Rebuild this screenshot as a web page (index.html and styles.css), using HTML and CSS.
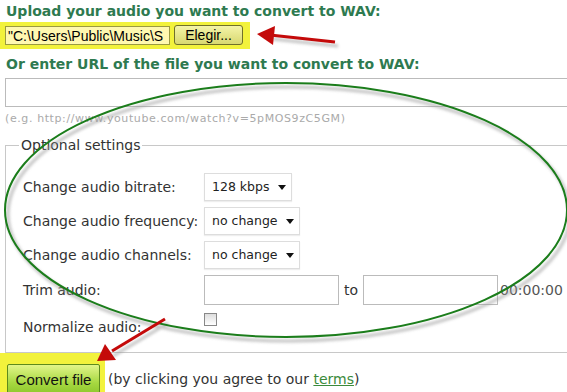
FILE: index.html
```html
<!DOCTYPE html>
<html lang="en">
<head>
    <meta charset="UTF-8">
    <meta name="viewport" content="width=device-width, initial-scale=1.0">
    <title>Convert audio to WAV</title>
    <link rel="stylesheet" href="styles.css">
</head>
<body>
    <div class="page">
        <h2 class="title">Upload your audio you want to convert to WAV:</h2>
        <div class="mark upload">
            <div class="file-path">"C:\Users\Public\Music\S</div>
            <button class="choose">Elegir...</button>
        </div>
        <h2 class="title second">Or enter URL of the file you want to convert to WAV:</h2>
        <div class="url"></div>
        <p class="hint">(e.g. http://www.youtube.com/watch?v=5pMOS9zC5GM)</p>

        <fieldset class="options">
            <legend>Optional settings</legend>
            <div class="row">
                <span class="label">Change audio bitrate:</span>
                <span class="select narrow">128 kbps<i class="caret"></i></span>
            </div>
            <div class="row">
                <span class="label">Change audio frequency:</span>
                <span class="select">no change<i class="caret"></i></span>
            </div>
            <div class="row">
                <span class="label">Change audio channels:</span>
                <span class="select">no change<i class="caret"></i></span>
            </div>
            <div class="row trim">
                <span class="label">Trim audio:</span>
                <span class="time"></span>
                <span class="to">to</span>
                <span class="time"></span>
                <span class="fmt">00:00:00</span>
            </div>
            <div class="row norm">
                <span class="label">Normalize audio:</span>
                <span class="check"></span>
            </div>
        </fieldset>

        <div class="submit">
            <span class="mark convert-mark"><button class="convert">Convert file</button></span>
            <span class="agree">(by clicking you agree to our <a href="#">terms</a>)</span>
        </div>

        <!-- hand drawn notes over the screenshot -->
        <svg class="notes" width="567" height="392" viewBox="0 0 567 392">
            <defs>
                <filter id="soft" x="-10%" y="-10%" width="120%" height="120%">
                    <feGaussianBlur stdDeviation="1.6"/>
                </filter>
            </defs>
            <g class="shadow" filter="url(#soft)" transform="translate(3 4)">
                <ellipse cx="286" cy="210" rx="281" ry="127"/>
                <line x1="335" y1="42" x2="270" y2="35"/>
                <line x1="165" y1="319" x2="110" y2="352"/>
            </g>
            <ellipse class="ring" cx="286" cy="210" rx="281" ry="127"/>
            <g class="arrow">
                <line x1="335" y1="42" x2="270" y2="35"/>
                <polygon points="257,34 275,26 273,45"/>
                <line x1="165" y1="319" x2="112" y2="351"/>
                <polygon points="97,361 105,344 116,360"/>
            </g>
        </svg>
    </div>
</body>
</html>
```

FILE: styles.css
```css
body {
    margin: 0;
    font-family: Verdana, "DejaVu Sans", sans-serif;
    color: #333;
    background: #fff;
    overflow: hidden;
}
.page {
    position: relative;
    width: 640px;
    height: 392px;
}
.title {
    margin: 0 0 0 6px;
    padding-top: 2px;
    font-size: 14px;
    line-height: 18px;
    font-weight: bold;
    color: #2e7a50;
}
.title.second {
    padding-top: 6px;
}
.mark {
    background: #f2f23c;
}
.upload {
    display: inline-flex;
    align-items: center;
    gap: 4px;
    margin-top: 2px;
    padding: 3px 7px 4px 5px;
}
.file-path {
    width: 165px;
    height: 19px;
    box-sizing: border-box;
    padding: 1px 2px;
    overflow: hidden;
    white-space: nowrap;
    background: #fff8b0;
    border: 1px solid #9a9a40;
    font-family: "Liberation Sans", Arial, sans-serif;
    font-size: 14px;
    line-height: 16px;
    color: #000;
}
.choose {
    width: 69px;
    height: 20px;
    padding: 0;
    border: 1px solid #70702a;
    border-radius: 3px;
    background: linear-gradient(#f4f4a8, #d8d870);
    font-family: "Liberation Sans", Arial, sans-serif;
    font-size: 14px;
    color: #000;
}
.url {
    margin: 5px 0 0 5px;
    height: 29px;
    border: 1px solid #bbb;
    border-right: none;
    box-sizing: border-box;
}
.hint {
    margin: 5px 0 0 5px;
    font-size: 11px;
    line-height: 14px;
    letter-spacing: 0.6px;
    color: #aaa;
}
.options {
    margin: 11px 0 0 5px;
    padding: 20px 0 15px 17px;
    border: 1px solid #c8c8c8;
    border-right: none;
}
.options legend {
    padding: 0 2px;
    margin-left: -4px;
    font-size: 14px;
    color: #333;
}
.row {
    display: flex;
    align-items: center;
    height: 28px;
    margin-bottom: 6px;
    font-size: 14px;
}
.label {
    width: 181px;
    flex: none;
}
.select {
    position: relative;
    width: 96px;
    height: 28px;
    box-sizing: border-box;
    padding: 0 0 0 7px;
    line-height: 26px;
    font-size: 12.5px;
    border: 1px solid #ddd;
    box-shadow: 0 1px 1px #eee;
    color: #222;
}
.select.narrow {
    width: 88px;
}
.caret {
    position: absolute;
    right: 5px;
    top: 11px;
    border-left: 4px solid transparent;
    border-right: 4px solid transparent;
    border-top: 5px solid #111;
}
.trim {
    height: 30px;
    margin-bottom: 8px;
}
.time {
    width: 135px;
    height: 30px;
    box-sizing: border-box;
    border: 1px solid #bbb;
}
.to {
    width: 24px;
    text-align: center;
}
.fmt {
    margin-left: 2px;
    color: #555;
}
.norm {
    align-items: flex-start;
    height: 24px;
    margin-bottom: 0;
}
.norm .label {
    padding-top: 6px;
}
.check {
    width: 13px;
    height: 13px;
    border: 1px solid #888;
    background: linear-gradient(#ddd, #fff);
    box-sizing: border-box;
}
.submit {
    display: flex;
    align-items: flex-start;
}
.convert-mark {
    display: inline-block;
    padding: 11px 5px 2px 7px;
}
.convert {
    display: block;
    width: 93px;
    height: 32px;
    padding: 0 0 2px;
    border: 1px solid #5d8a1c;
    border-radius: 2px;
    background: linear-gradient(#e2f58a, #a6d840 60%, #8cc62c);
    font-family: "Liberation Sans", Arial, sans-serif;
    font-size: 15px;
    color: #111;
}
.agree {
    margin-left: 3px;
    padding-top: 18px;
    font-size: 14px;
}
.agree a {
    color: #3b8a3b;
}
.notes {
    position: absolute;
    left: 0;
    top: 0;
    pointer-events: none;
}
.shadow {
    fill: none;
    stroke: #9a9a9a;
    stroke-width: 3;
    opacity: 0.6;
}
.ring {
    fill: none;
    stroke: #1b7d1b;
    stroke-width: 2;
}
.arrow line {
    stroke: #c40a0a;
    stroke-width: 3;
}
.arrow polygon {
    fill: #c40a0a;
}
```
